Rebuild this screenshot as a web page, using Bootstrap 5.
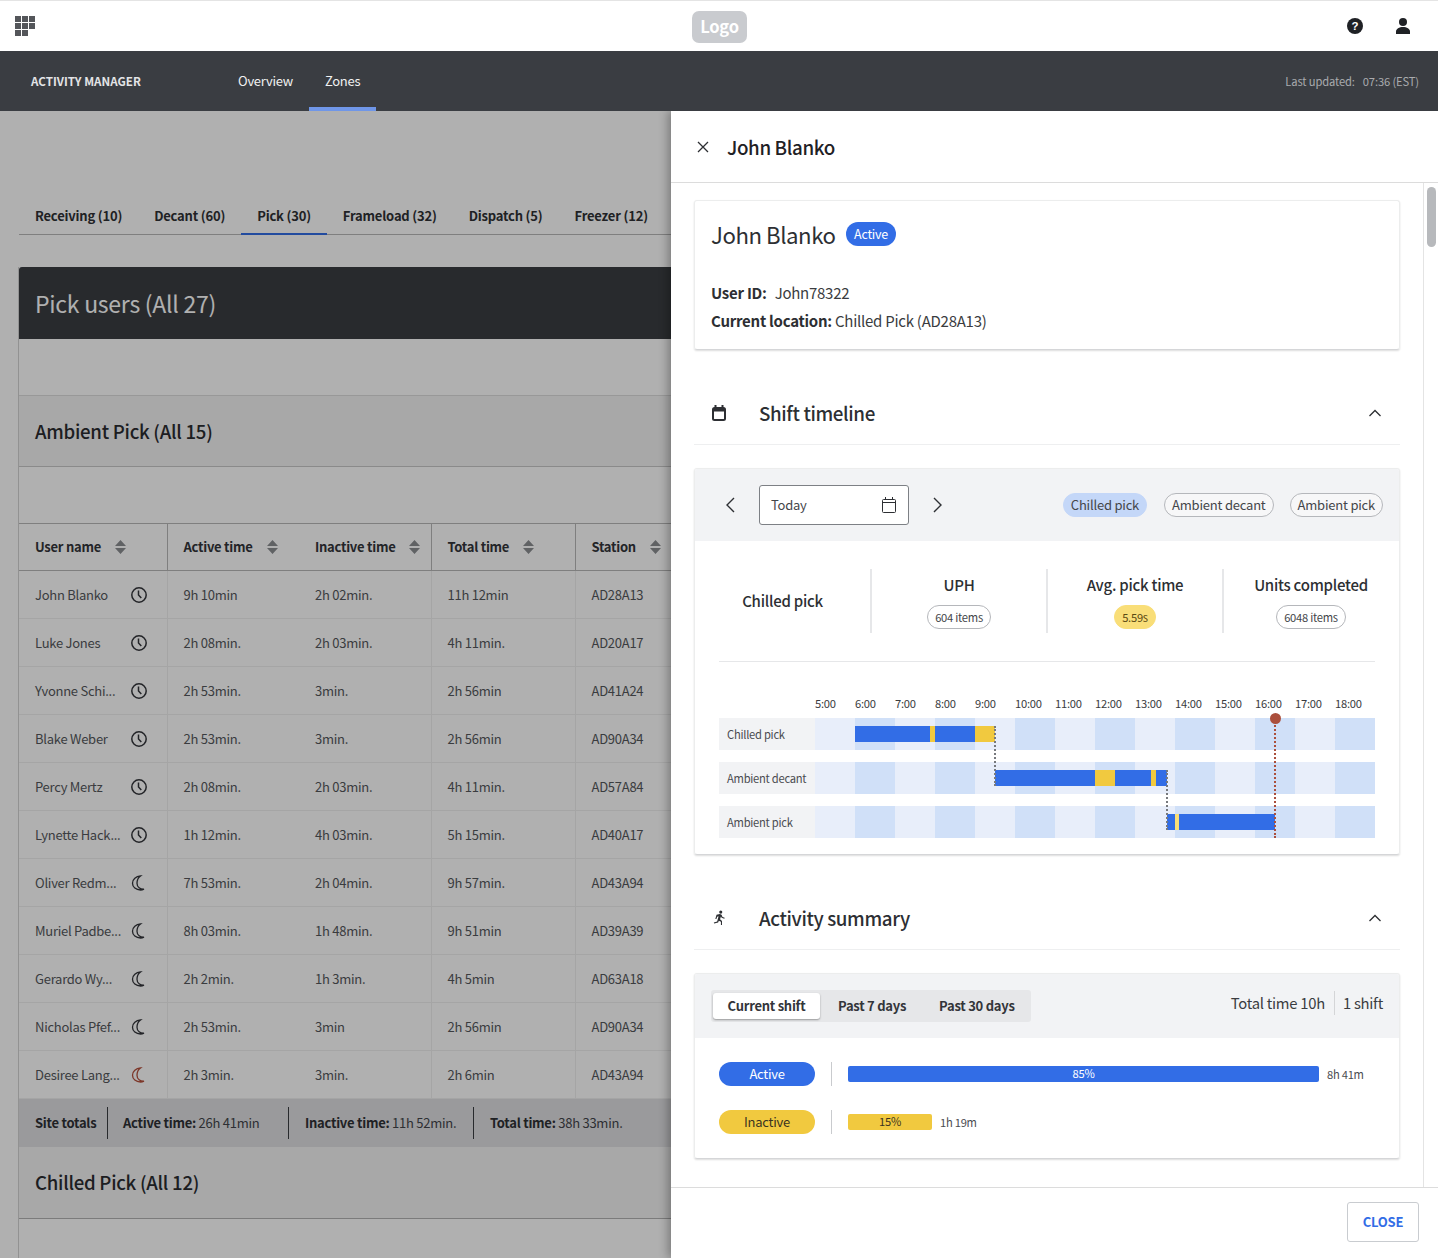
<!DOCTYPE html>
<html lang="en">
<head>
<meta charset="utf-8">
<title>Activity Manager</title>
<link rel="stylesheet" href="https://cdn.jsdelivr.net/npm/bootstrap@5.3.0/dist/css/bootstrap.min.css">
<style>
html,body{height:100%;}
body{font-family:"Noto Sans CJK SC","Noto Sans",sans-serif;font-size:13px;line-height:20px;letter-spacing:-.02em;color:#2d2f33;overflow:hidden;width:1438px;height:1258px;}
.shell{height:1258px;}
.topbar{height:51px;border-top:1px solid #e4e4e4;background:#fff;padding:0 28px 0 15px;}
.logo-chip{left:692px;top:10px;width:55px;height:32px;background:#c9cbcf;color:#fff;font-size:16.500px;font-weight:700;border-radius:7px;line-height:30px;text-align:center;}
.am-nav{height:60px;background:#3a3d42;padding:0 19px 0 31px;}
.am-brand{width:191px;font-size:11.600px;font-weight:600;color:#e3e4e6;letter-spacing:0;}
.am-link{display:flex;align-items:center;height:60px;padding:0 16px;color:#f1f1f1;font-size:13px;text-decoration:none;}
.am-link.on{box-shadow:inset 0 -4px 0 #6f96e8;}
.am-updated{font-size:11.200px;color:#a9abae;letter-spacing:-.012em;}
.stage{height:1147px;overflow:hidden;background:#fff;}
.veil{inset:0;background:rgba(0,0,0,.31);}
.under{padding:87px 0 0 18px;width:1419px;}
.tabline{border-bottom:1px solid #b9b9b9;height:37px;margin-left:1px;}
.tab-i{padding:0 16px;font-weight:600;color:#2f3135;font-size:13px;height:37px;line-height:35px;white-space:nowrap;letter-spacing:-.015em;}
.tab-i.on{box-shadow:inset 0 -2px 0 #326de6;font-weight:600;}
.sheet{margin-top:32px;border-left:1px solid #d4d4d4;}
.sheet-dark{height:72px;background:#3a3d42;color:#fff;font-size:23px;line-height:72px;padding-left:16px;border-radius:3px 3px 0 0;}
.gap-band{height:56px;}
.grp-band{height:72px;background:#f3f3f4;border-top:1px solid #dcdcdc;border-bottom:1px solid #c8c8c8;font-size:18.600px;font-weight:500;line-height:70px;padding-left:16px;color:#2a2c30;}
.grp-band.last{border-top:0;border-bottom:1px solid #b2b2b2;}
.users{table-layout:fixed;width:1400px;margin:0;border-top:1px solid #b9b9b9;--bs-table-bg:transparent;color:#55585c;}
.users th,.users td{padding:0 16px;vertical-align:middle;white-space:nowrap;overflow:hidden;font-size:13px;}
.users th{height:47px;font-weight:600;color:#33353a;border-bottom:1px solid #b9b9b9;}
.users td{height:48px;border-bottom:1px solid #efefef;}
.users .v{border-right:1px solid #efefef;}
.users th.v{border-right:1px solid #b9b9b9;}
.users td.nm{padding-right:20px;}
.users .moon-i{margin-right:2px;}
.sort{width:11px;height:14px;flex:none;}
.totals{height:48px;background:#dfe0e3;padding-left:16px;color:#43454a;white-space:nowrap;}
.totals b{font-weight:600;color:#2f3135;}
.tot-cell{height:32px;display:flex;align-items:center;flex:none;}
.tot-cell+.tot-cell{border-left:1px solid #3a3d42;padding-left:15px;}
.tot-cell+.tot-cell+.tot-cell{padding-left:16px;}
.drawer{position:absolute;left:671px;top:0;width:767px;height:1147px;background:#fff;box-shadow:-3px 0 9px rgba(0,0,0,.3);}
.dr-head{height:72px;padding-left:26px;border-bottom:1px solid #dcdcdc;flex:none;}
.dr-head h1{margin:0 0 0 18px;font-size:18.800px;line-height:28px;font-weight:500;color:#1f2125;letter-spacing:-.02em;}
.dr-mid{flex:1 1 auto;min-height:0;}
.dr-body{flex:1 1 auto;padding:17px 23px 0;}
.rail{width:15px;flex:none;border-left:1px solid #e4e4e4;padding:4px 2px 0 3px;}
.thumb{height:60px;background:#b7b9bc;border-radius:5px;width:9px;}
.dr-foot{height:71px;border-top:1px solid #dcdcdc;padding-right:19px;padding-bottom:2px;flex:none;}
.btn-shut{width:72px;height:40px;border:1px solid #c9ccd0;border-radius:3px;background:#fff;color:#326de6;font-size:13px;font-weight:700;padding:0;line-height:38px;letter-spacing:-.02em;}
.pane{border:1px solid #eceded;border-bottom-color:#d5d6d8;border-radius:3px;box-shadow:0 1px 2px rgba(0,0,0,.14);overflow:hidden;}
.who{height:150px;padding:19px 16px 0;}
.who-name{font-size:22.200px;line-height:28px;font-weight:400;color:#2d2f33;margin:0;letter-spacing:-.02em;}
.pill-act{background:#326de6;color:#fff;font-size:12.500px;font-weight:400;height:24px;line-height:23px;padding:0 8.500px;border-radius:12px;margin-left:10px;}
.who p{margin:0;font-size:15px;line-height:28px;color:#3a3c40;}
.who b{font-weight:600;color:#2d2f33;}
.who .first{margin-top:31px;}
.uid{margin-left:8px;}
.sec-head{height:63px;border-bottom:1px solid #eeeff0;padding:0 19px 0 18px;margin-top:32px;margin-bottom:23px;}
.sec-head h2{font-size:18.800px;line-height:28px;font-weight:500;margin:0 0 0 33px;color:#2d2f33;flex:1 1 auto;letter-spacing:-.02em;}
.sec-head svg{flex:none;}
.pane-top{background:#f2f3f5;padding:0 16px;}
.tl-top{height:72px;padding-left:31px;}
.date-box{width:150px;height:40px;border:1px solid #7d8085;border-radius:3px;background:#fff;padding:0 12px 0 11px;margin:0 24px;font-size:13px;color:#44464a;}
.chip{height:24px;border:1px solid #b5b7bb;border-radius:12px;padding:0 7px;line-height:22px;font-size:13px;color:#44464a;margin-left:17px;background:#f7f7f8;white-space:nowrap;letter-spacing:-.016em;}
.chip.sel{background:#c4d7f8;border-color:#c4d7f8;}
.stats{height:92px;padding-top:28px;}
.st-col{width:176px;height:64px;text-align:center;}
.st-col:first-child{width:175px;}
.st-col+.st-col{border-left:2px solid #e6e7e9;}
.st-title{font-size:15px;line-height:20px;font-weight:500;color:#2d2f33;margin-top:6px;}
.st-lead{font-size:15px;font-weight:500;line-height:63px;color:#2d2f33;}
.st-chip{display:inline-block;height:24px;line-height:22px;font-size:11.200px;padding:0 7px;border:1px solid #b5b7bb;border-radius:12px;color:#44464a;margin-top:10px;}
.st-chip.warn{background:#f9de78;border-color:#f9de78;color:#5b4a12;}
.chart{position:relative;margin:28px 24px 0;border-top:1px solid #e6e7e9;padding-top:33px;height:193px;}
.hours{margin-left:96px;height:23px;}
.hours span{width:40px;font-size:11.200px;line-height:16px;color:#3a3c40;flex:none;}
.tl-row{height:32px;margin-bottom:12px;}
.tl-name{width:96px;background:#f2f3f5;padding-left:8px;font-size:11.200px;line-height:32px;color:#4a4c50;flex:none;white-space:nowrap;}
.track{position:relative;width:560px;background:repeating-linear-gradient(90deg,#e8eefa 0 40px,#d0e0f8 40px 80px);}
.seg{position:absolute;top:8px;height:16px;}
.blue{background:#326de6;}
.amber{background:#f1c93f;}
.amber2{background:#f9de78;}
.link-dot{position:absolute;border-left:2px dotted #77797d;width:0;}
.now-line{position:absolute;border-left:2px dotted #ab4f3c;width:0;}
.now-dot{position:absolute;width:11px;height:11px;background:#ab4f3c;border-radius:50%;}
.sum-top{height:64px;}
.seg-group{width:320px;height:32px;background:#e6e7e9;border-radius:3px;padding:3px 2px;}
.seg-btn{font-size:13px;font-weight:600;color:#33353a;padding:0;border:0;background:none;height:26px;white-space:nowrap;letter-spacing:-.02em;line-height:24px;}
.seg-btn.on{width:107px;background:#fff;border-radius:3px;box-shadow:0 1px 2px rgba(0,0,0,.35);flex:none;}
.tot-r{font-size:14.800px;line-height:20px;color:#3a3c40;margin-top:-6px;white-space:nowrap;}
.tot-r span+span{border-left:1px solid #d4d5d7;margin-left:9px;padding-left:8px;height:24px;line-height:24px;}
.sum-body{height:120px;padding:24px 24px 0;}
.act-row{height:24px;margin-bottom:24px;}
.act-pill{width:96px;height:24px;border-radius:12px;text-align:center;line-height:23px;font-size:13px;flex:none;}
.act-pill.a{background:#326de6;color:#fff;}
.act-pill.i{background:#f1c93f;color:#3a3320;}
.act-sep{height:24px;border-left:1px solid #c9cbce;margin:0 16px;flex:none;}
.act-bar{height:16px;border-radius:2px;font-size:11.200px;line-height:15px;text-align:center;flex:none;}
.act-time{font-size:11.200px;color:#4a4c50;margin-left:8px;line-height:15px;}
</style>
</head>
<body>
<div class="shell d-flex flex-column">
  <div class="topbar d-flex align-items-center justify-content-between position-relative flex-none">
    <svg width="21" height="20" viewBox="0 0 21 20" aria-hidden="true" fill="#54565a"><rect x="0" y="0" width="6" height="6"/><rect x="7" y="0" width="6" height="6"/><rect x="14" y="0" width="6" height="6"/><rect x="0" y="7" width="6" height="6"/><rect x="7" y="7" width="6" height="6"/><rect x="14" y="7" width="6" height="6"/><rect x="0" y="14" width="6" height="6"/><rect x="7" y="14" width="6" height="6"/></svg>
    <div class="logo-chip position-absolute">Logo</div>
    <div class="d-flex align-items-center" style="gap:33px">
      <svg width="16" height="16" viewBox="0 0 16 16" aria-hidden="true"><circle cx="8" cy="8" r="8" fill="#1f2125"/><text x="8" y="12" text-anchor="middle" font-size="11.5" font-weight="700" fill="#fff" font-family="Liberation Sans, sans-serif">?</text></svg>
      <svg width="14" height="16" viewBox="0 0 14 16" aria-hidden="true" fill="#1f2125"><circle cx="7" cy="4" r="4"/><path d="M0 16v-2.5C0 10.8 3.2 9 7 9s7 1.8 7 4.500V16z"/></svg>
    </div>
  </div>
  <nav class="am-nav d-flex align-items-center">
    <div class="am-brand">ACTIVITY MANAGER</div>
    <a class="am-link" href="#">Overview</a>
    <a class="am-link on" href="#">Zones</a>
    <div class="am-updated ms-auto d-flex" style="gap:8px"><span>Last updated:</span><span>07:36 (EST)</span></div>
  </nav>
  <div class="stage position-relative">
    <div class="under">
      <div class="tabline d-flex">
        <div class="tab-i">Receiving (10)</div><div class="tab-i">Decant (60)</div><div class="tab-i on">Pick (30)</div><div class="tab-i">Frameload (32)</div><div class="tab-i">Dispatch (5)</div><div class="tab-i">Freezer (12)</div>
      </div>
      <div class="sheet">
        <div class="sheet-dark">Pick users (All 27)</div>
        <div class="gap-band"></div>
        <div class="grp-band">Ambient Pick (All 15)</div>
        <div class="gap-band"></div>
        <table class="table users">
          <colgroup><col style="width:148px"><col style="width:132px"><col style="width:132px"><col style="width:144px"><col style="width:844px"></colgroup>
          <thead><tr>
            <th class="v"><div class="d-flex align-items-center" style="gap:14px">User name<svg class="sort" viewBox="0 0 11 14" aria-hidden="true" fill="#8c8e92"><path d="M5.500 0 11 6H0zM0 8h11l-5.500 6z"/></svg></div></th>
            <th><div class="d-flex align-items-center" style="gap:14px">Active time<svg class="sort" viewBox="0 0 11 14" aria-hidden="true" fill="#8c8e92"><path d="M5.500 0 11 6H0zM0 8h11l-5.500 6z"/></svg></div></th>
            <th class="v"><div class="d-flex align-items-center" style="gap:14px">Inactive time<svg class="sort" viewBox="0 0 11 14" aria-hidden="true" fill="#8c8e92"><path d="M5.500 0 11 6H0zM0 8h11l-5.500 6z"/></svg></div></th>
            <th class="v"><div class="d-flex align-items-center" style="gap:14px">Total time<svg class="sort" viewBox="0 0 11 14" aria-hidden="true" fill="#8c8e92"><path d="M5.500 0 11 6H0zM0 8h11l-5.500 6z"/></svg></div></th>
            <th><div class="d-flex align-items-center" style="gap:14px">Station<svg class="sort" viewBox="0 0 11 14" aria-hidden="true" fill="#8c8e92"><path d="M5.500 0 11 6H0zM0 8h11l-5.500 6z"/></svg></div></th>
          </tr></thead>
          <tbody id="rows"></tbody>
        </table>
        <div class="totals d-flex align-items-center">
          <div class="tot-cell" style="width:72px"><b>Site totals</b></div>
          <div class="tot-cell" style="width:181px"><span><b>Active time:</b> 26h 41min</span></div>
          <div class="tot-cell" style="width:185px"><span><b>Inactive time:</b> 11h 52min.</span></div>
          <div class="tot-cell"><span><b>Total time:</b> 38h 33min.</span></div>
        </div>
        <div class="grp-band last">Chilled Pick (All 12)</div>
        <div style="height:60px"></div>
      </div>
    </div>
    <div class="veil position-absolute"></div>
    <aside class="drawer d-flex flex-column">
      <div class="dr-head d-flex align-items-center">
        <svg width="12" height="12" viewBox="0 0 12 12" aria-hidden="true" stroke="#2d2f33" stroke-width="1.300" fill="none"><path d="M1 1l10 10M11 1 1 11"/></svg>
        <h1>John Blanko</h1>
      </div>
      <div class="dr-mid d-flex">
        <div class="dr-body">
          <div class="pane who">
            <div class="d-flex align-items-center"><h3 class="who-name">John Blanko</h3><span class="pill-act">Active</span></div>
            <p class="first"><b>User ID:</b><span class="uid">John78322</span></p>
            <p><b>Current location:</b> Chilled Pick (AD28A13)</p>
          </div>
          <div class="sec-head d-flex align-items-center">
            <svg width="14" height="16" viewBox="0 0 14 16" aria-hidden="true"><path d="M3.500 0v3M10.500 0v3" stroke="#2d2f33" stroke-width="2"/><rect x="1" y="3" width="12" height="12" rx="1.500" fill="none" stroke="#2d2f33" stroke-width="2"/><rect x="1" y="3" width="12" height="3.500" fill="#2d2f33"/></svg>
            <h2>Shift timeline</h2>
            <svg width="12" height="8" viewBox="0 0 12 8" aria-hidden="true" fill="none" stroke="#2d2f33" stroke-width="1.300"><path d="M.5 7 6 1.500 11.500 7"/></svg>
          </div>
          <div class="pane">
            <div class="pane-top tl-top d-flex align-items-center">
              <svg width="9" height="16" viewBox="0 0 9 16" aria-hidden="true" fill="none" stroke="#2d2f33" stroke-width="1.400"><path d="M8 1 1 8l7 7"/></svg>
              <div class="date-box d-flex align-items-center justify-content-between"><span>Today</span>
                <svg width="14" height="16" viewBox="0 0 14 16" aria-hidden="true" fill="none" stroke="#2d2f33" stroke-width="1"><path d="M3.500 0v3M10.500 0v3M.5 5.500h13"/><rect x=".5" y="2.500" width="13" height="13" rx="1"/></svg>
              </div>
              <svg width="9" height="16" viewBox="0 0 9 16" aria-hidden="true" fill="none" stroke="#2d2f33" stroke-width="1.400"><path d="M1 1l7 7-7 7"/></svg>
              <div class="d-flex ms-auto"><span class="chip sel">Chilled pick</span><span class="chip">Ambient decant</span><span class="chip" style="margin-left:16px">Ambient pick</span></div>
            </div>
            <div class="stats d-flex">
              <div class="st-col"><div class="st-lead">Chilled pick</div></div>
              <div class="st-col"><div class="st-title">UPH</div><span class="st-chip">604 items</span></div>
              <div class="st-col"><div class="st-title">Avg. pick time</div><span class="st-chip warn">5.59s</span></div>
              <div class="st-col"><div class="st-title">Units completed</div><span class="st-chip">6048 items</span></div>
            </div>
            <div class="chart">
              <div class="hours d-flex"><span>5:00</span><span>6:00</span><span>7:00</span><span>8:00</span><span>9:00</span><span>10:00</span><span>11:00</span><span>12:00</span><span>13:00</span><span>14:00</span><span>15:00</span><span>16:00</span><span>17:00</span><span>18:00</span></div>
              <div class="tl-row d-flex"><div class="tl-name">Chilled pick</div><div class="track">
                <div class="seg blue" style="left:40px;width:75px"></div><div class="seg amber" style="left:115px;width:5px"></div><div class="seg blue" style="left:120px;width:40px"></div><div class="seg amber" style="left:160px;width:20px"></div></div></div>
              <div class="tl-row d-flex"><div class="tl-name">Ambient decant</div><div class="track">
                <div class="seg blue" style="left:180px;width:100px"></div><div class="seg amber" style="left:280px;width:20px"></div><div class="seg blue" style="left:300px;width:36px"></div><div class="seg amber" style="left:336px;width:5px"></div><div class="seg blue" style="left:341px;width:11px"></div></div></div>
              <div class="tl-row d-flex"><div class="tl-name">Ambient pick</div><div class="track">
                <div class="seg blue" style="left:352px;width:8px"></div><div class="seg amber2" style="left:360px;width:4px"></div><div class="seg blue" style="left:364px;width:96px"></div></div></div>
              <div class="link-dot" style="left:275px;top:64px;height:60px"></div>
              <div class="link-dot" style="left:447px;top:108px;height:60px"></div>
              <div class="now-line" style="left:555px;top:56px;height:120px"></div>
              <div class="now-dot" style="left:551px;top:51px"></div>
            </div>
          </div>
          <div class="sec-head d-flex align-items-center">
            <svg width="14" height="16" viewBox="0 0 16 18" aria-hidden="true" fill="#2d2f33"><circle cx="10" cy="2.200" r="1.800"/><path d="M5.200 5.200 9 4.400l1.900.9 1.100 2.500 2.500.9-.4 1.100-3.100-1-.8-1.600-1 3.300 2.200 2v4.500H10.200v-3.800L7.800 12l-.8 2.200-4.600 1.100-.3-1.200 3.800-1L7.500 7 6 7.500 5 10H3.800z"/></svg>
            <h2>Activity summary</h2>
            <svg width="12" height="8" viewBox="0 0 12 8" aria-hidden="true" fill="none" stroke="#2d2f33" stroke-width="1.300"><path d="M.5 7 6 1.500 11.500 7"/></svg>
          </div>
          <div class="pane">
            <div class="pane-top sum-top d-flex align-items-center justify-content-between">
              <div class="seg-group d-flex">
                <button class="seg-btn on" type="button">Current shift</button>
                <button class="seg-btn" type="button" style="margin-left:18px">Past 7 days</button>
                <button class="seg-btn" type="button" style="margin-left:33px">Past 30 days</button>
              </div>
              <div class="tot-r d-flex align-items-center"><span>Total time 10h</span><span>1 shift</span></div>
            </div>
            <div class="sum-body">
              <div class="act-row d-flex align-items-center"><div class="act-pill a">Active</div><div class="act-sep"></div><div class="act-bar blue text-white" style="width:471px">85%</div><div class="act-time">8h 41m</div></div>
              <div class="act-row d-flex align-items-center"><div class="act-pill i">Inactive</div><div class="act-sep"></div><div class="act-bar amber" style="width:84px;color:#3a3320">15%</div><div class="act-time">1h 19m</div></div>
            </div>
          </div>
        </div>
        <div class="rail"><div class="thumb"></div></div>
      </div>
      <div class="dr-foot d-flex align-items-center justify-content-end"><button class="btn btn-shut" type="button">CLOSE</button></div>
    </aside>
  </div>
</div>
<script>
var clock='<svg width="16" height="16" viewBox="0 0 16 16" aria-hidden="true" fill="none" stroke="#33353a" stroke-width="1.500"><circle cx="8" cy="8" r="7.200"/><path d="M7.500 3.500V8l2.800 3"/></svg>';
function moon(c){return '<svg class="moon-i" width="14" height="16" viewBox="0 0 14 16" aria-hidden="true" fill="none" stroke="'+c+'" stroke-width="1.300"><path d="M9.500 1C5 1.300 1.500 4.200 1.500 8.200c0 4 3.500 6.800 8 6.800 1.300 0 2.400-.3 3.500-.8-3.700.3-7-2-7-5.900 0-3.100 1.500-5.900 3.500-7.300z"/></svg>';}
var data=[["John Blanko","c","9h 10min","2h 02min.","11h 12min","AD28A13"],["Luke Jones","c","2h 08min.","2h 03min.","4h 11min.","AD20A17"],["Yvonne Schi...","c","2h 53min.","3min.","2h 56min","AD41A24"],["Blake Weber","c","2h 53min.","3min.","2h 56min","AD90A34"],["Percy Mertz","c","2h 08min.","2h 03min.","4h 11min.","AD57A84"],["Lynette Hack...","c","1h 12min.","4h 03min.","5h 15min.","AD40A17"],["Oliver Redm...","m","7h 53min.","2h 04min.","9h 57min.","AD43A94"],["Muriel Padbe...","m","8h 03min.","1h 48min.","9h 51min","AD39A39"],["Gerardo Wy...","m","2h 2min.","1h 3min.","4h 5min","AD63A18"],["Nicholas Pfef...","m","2h 53min.","3min","2h 56min","AD90A34"],["Desiree Lang...","r","2h 3min.","3min.","2h 6min","AD43A94"]];
document.getElementById('rows').innerHTML=data.map(function(r){var ic=r[1]=='c'?clock:moon(r[1]=='r'?'#b5503c':'#33353a');
return '<tr><td class="v nm"><div class="d-flex align-items-center justify-content-between"><span>'+r[0]+'</span>'+ic+'</div></td><td>'+r[2]+'</td><td class="v">'+r[3]+'</td><td class="v">'+r[4]+'</td><td>'+r[5]+'</td></tr>';}).join('');
</script>
<script src="https://cdn.jsdelivr.net/npm/bootstrap@5.3.0/dist/js/bootstrap.bundle.min.js"></script>
</body>
</html>
